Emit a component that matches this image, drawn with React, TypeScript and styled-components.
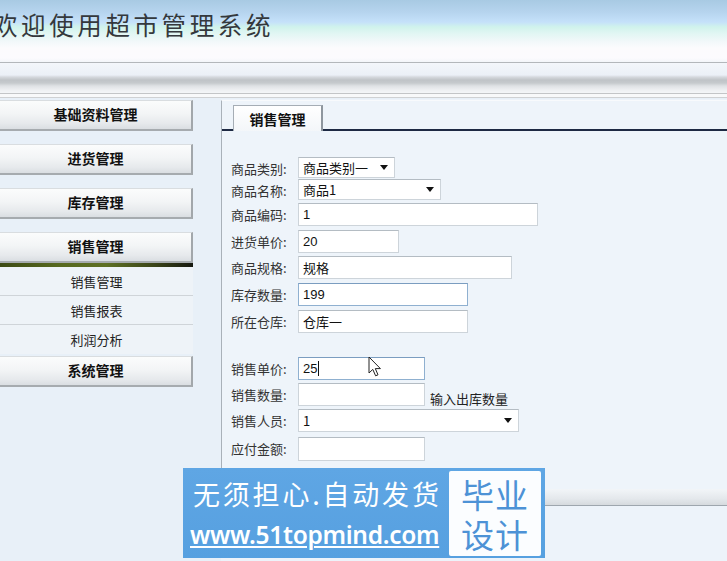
import React from 'react';
import styled, { createGlobalStyle } from 'styled-components';

const Global = createGlobalStyle`
  html, body { margin: 0; padding: 0; }
  body {
    width: 727px; height: 561px; overflow: hidden; background: #edf3fa;
    font-family: "Noto Sans CJK SC", "Noto Sans", sans-serif;
  }
`;

const Page = styled.div`
  position: relative;
  width: 727px;
  height: 561px;
  display: flex;
  flex-direction: column;
  overflow: hidden;
  background: #edf3fa;
`;

const Header = styled.header`
  height: 62px;
  flex: none;
  display: flex;
  align-items: flex-start;
  background: linear-gradient(to bottom, #a8cae3 0px, #b6d4ee 12px, #c5e1fa 22px, #d0f3ec 27px, #e0f6f3 33px, #f3f8fa 42px, #fcfbfd 48px, #fcfbfe 58px, #f3f6fa 62px);
`;

const Title = styled.h1`
  margin: 8px 0 0 -7px;
  font-weight: 400;
  font-size: 24.5px;
  line-height: 34px;
  letter-spacing: 3.6px;
  color: #34383c;
`;

const NavStrip = styled.div`
  height: 37px;
  flex: none;
  background: linear-gradient(to bottom,
    #b3b7bb 0px, #b3b7bb 1px,
    #f3f6fb 1px, #ebf0f7 13px,
    #d5d9de 15px, #bfc3c7 18px, #c6cacd 21px, #dfe2e5 24px, #eef0f2 28px, #f4f6f8 31px,
    #c3c5c7 31px, #c3c5c7 32px,
    #f8f9fa 32px, #f8f9fa 35px,
    #cfd1d3 35px, #cfd1d3 36px,
    #e8f0f8 36px);
`;

const Body = styled.div`
  flex: 1;
  display: flex;
  min-height: 0;
`;

const Sidebar = styled.nav`
  width: 221px;
  flex: none;
  background: #e8f0f8;
  padding-top: 1px;
  display: flex;
  flex-direction: column;
  align-items: flex-start;
`;

const MenuButton = styled.div<{ $gap: number }>`
  box-sizing: border-box;
  width: 193px;
  height: 31px;
  margin-bottom: ${p => p.$gap}px;
  padding-bottom: 2px;
  display: flex;
  align-items: center;
  justify-content: center;
  font-size: 14px;
  font-weight: 700;
  color: #111;
  background: linear-gradient(to bottom, #fbfcfc 0%, #f3f5f6 45%, #e6e9ec 80%, #dadee2 100%);
  border-top: 1px solid #d9dde0;
  border-right: 2px solid #a2a7ab;
  border-bottom: 2px solid #a6abaf;
`;

const ActiveBar = styled.div`
  width: 193px;
  height: 4px;
  background: linear-gradient(to right, #3c4a14 0%, #56681e 30%, #5e7024 55%, #3a4418 80%, #151810 100%);
`;

const SubItem = styled.div`
  box-sizing: border-box;
  width: 193px;
  height: 29px;
  display: flex;
  align-items: center;
  justify-content: center;
  font-size: 13px;
  color: #222;
  background: #eef3f8;
  border-bottom: 1px solid #cfd4d9;
  &:last-of-type { border-bottom: none; }
`;

const SubList = styled.div`
  display: flex;
  flex-direction: column;
  margin-bottom: 2px;
`;

const Main = styled.main`
  flex: 1;
  display: flex;
  flex-direction: column;
  min-width: 0;
  padding-top: 1px;
`;

const Panel = styled.section`
  border-left: 1px solid #a9b1b9;
  border-top: 1px solid #f8fafc;
  background: #eef4fa;
  display: flex;
  flex-direction: column;
`;

const TabBar = styled.div`
  height: 28px;
  display: flex;
  align-items: flex-end;
  padding-left: 11px;
  border-bottom: 2px solid #1d2943;
`;

const Tab = styled.div`
  box-sizing: border-box;
  width: 90px;
  height: 26px;
  margin-bottom: -2px;
  display: flex;
  align-items: center;
  justify-content: center;
  font-size: 14px;
  font-weight: 700;
  color: #111;
  background: linear-gradient(to bottom, #ffffff, #f3f6f9);
  border: 1px solid #a5adb5;
  border-bottom: none;
  border-right: 2px solid #8e969e;
`;

const FormArea = styled.div`
  padding: 26px 0 0 9px;
  display: flex;
  flex-direction: column;
`;

const Group = styled.div<{ $gapAfter?: number }>`
  display: flex;
  flex-direction: column;
  margin-bottom: ${p => p.$gapAfter ?? 0}px;
`;

const Row = styled.div<{ $h: number }>`
  height: ${p => p.$h}px;
  display: flex;
  align-items: flex-start;
`;

const Label = styled.span`
  width: 67px;
  flex: none;
  font-size: 13px;
  line-height: 20px;
  margin-top: 2px;
  color: #333;
  white-space: nowrap;
`;

const Field = styled.div<{ $w: number; $h?: number; $accent?: boolean }>`
  box-sizing: border-box;
  width: ${p => p.$w}px;
  height: ${p => p.$h ?? 23}px;
  background: #fff;
  border: 1px solid ${p => (p.$accent ? '#8fb0d0' : '#cdd4da')};
  border-top-color: ${p => (p.$accent ? '#7b9dc0' : '#b4bcc3')};
  padding: 0 4px;
  display: flex;
  align-items: center;
  font-family: "Liberation Sans", "Noto Sans CJK SC", sans-serif;
  font-size: 13px;
  color: #111;
`;

const SelectBox = styled(Field)`
  justify-content: space-between;
  font-family: "Noto Sans CJK SC", sans-serif;
  padding-right: 6px;
`;

const Arrow = styled.span`
  width: 0; height: 0;
  border-left: 4px solid transparent;
  border-right: 4px solid transparent;
  border-top: 5px solid #111;
`;

const Caret = styled.span`
  display: inline-block;
  width: 1px;
  height: 15px;
  background: #111;
  margin-left: 1px;
`;

const Hint = styled.span`
  font-size: 13px;
  line-height: 20px;
  margin: 6px 0 0 5px;
  color: #222;
`;

const FooterStrip = styled.div`
  margin-top: 28px;
  height: 16px;
  background: linear-gradient(to bottom, #f2f5f8, #e4e8ec 60%, #d6dade);
  border-bottom: 1px solid #9ea6ae;
`;

const Watermark = styled.div`
  position: absolute;
  left: 183px;
  top: 468px;
  width: 362px;
  height: 90px;
  background: linear-gradient(to bottom, #5fa6e4, #56a0e0);
  display: flex;
  align-items: flex-start;
`;

const WmText = styled.div`
  width: 266px;
  display: flex;
  flex-direction: column;
  padding-left: 7px;
  box-sizing: border-box;
  color: #fff;
`;

const WmLine1 = styled.div`
  font-size: 27px;
  letter-spacing: 2.8px;
  line-height: 34px;
  margin-top: 9px;
  padding-left: 3px;
  white-space: nowrap;
`;

const WmLine2 = styled.div`
  font-family: "Noto Sans", "Open Sans", sans-serif;
  font-size: 24.5px;
  font-weight: 600;
  line-height: 32px;
  margin-top: 8px;
  text-decoration: underline;
  text-decoration-thickness: 2px;
  text-underline-offset: 2px;
  letter-spacing: -0.3px;
  white-space: nowrap;
`;

const WmBadge = styled.div`
  margin-top: 3px;
  width: 92px;
  height: 85px;
  background: #fbfdff;
  border-radius: 2px;
  display: flex;
  flex-direction: column;
  align-items: center;
  justify-content: center;
  color: #4d92d6;
  font-size: 33px;
  line-height: 40px;
  letter-spacing: 1px;
`;

const Pointer = styled.svg`
  position: absolute;
  left: 368px;
  top: 356px;
`;

export default function App() {
  return (
    <Page>
      <Global />
      <Header>
        <Title>欢迎使用超市管理系统</Title>
      </Header>
      <NavStrip />
      <Body>
        <Sidebar>
          <MenuButton $gap={13}>基础资料管理</MenuButton>
          <MenuButton $gap={13}>进货管理</MenuButton>
          <MenuButton $gap={13}>库存管理</MenuButton>
          <MenuButton $gap={0}>销售管理</MenuButton>
          <ActiveBar />
          <SubList>
            <SubItem>销售管理</SubItem>
            <SubItem>销售报表</SubItem>
            <SubItem>利润分析</SubItem>
          </SubList>
          <MenuButton $gap={0}>系统管理</MenuButton>
        </Sidebar>
        <Main>
          <Panel>
            <TabBar>
              <Tab>销售管理</Tab>
            </TabBar>
            <FormArea>
              <Group $gapAfter={20}>
                <Row $h={22}>
                  <Label>商品类别:</Label>
                  <SelectBox $w={97} $h={21}>商品类别一<Arrow /></SelectBox>
                </Row>
                <Row $h={24}>
                  <Label>商品名称:</Label>
                  <SelectBox $w={143} $h={21}>商品1<Arrow /></SelectBox>
                </Row>
                <Row $h={27}>
                  <Label>商品编码:</Label>
                  <Field $w={240}>1</Field>
                </Row>
                <Row $h={26}>
                  <Label>进货单价:</Label>
                  <Field $w={101}>20</Field>
                </Row>
                <Row $h={27}>
                  <Label>商品规格:</Label>
                  <Field $w={214}>规格</Field>
                </Row>
                <Row $h={27}>
                  <Label>库存数量:</Label>
                  <Field $w={170} $accent>199</Field>
                </Row>
                <Row $h={27}>
                  <Label>所在仓库:</Label>
                  <Field $w={170}>仓库一</Field>
                </Row>
              </Group>
              <Group>
                <Row $h={26}>
                  <Label>销售单价:</Label>
                  <Field $w={127} $accent>25<Caret /></Field>
                </Row>
                <Row $h={26}>
                  <Label>销售数量:</Label>
                  <Field $w={127}></Field>
                  <Hint>输入出库数量</Hint>
                </Row>
                <Row $h={28}>
                  <Label>销售人员:</Label>
                  <SelectBox $w={221}>1<Arrow /></SelectBox>
                </Row>
                <Row $h={24}>
                  <Label>应付金额:</Label>
                  <Field $w={127} $h={24}></Field>
                </Row>
              </Group>
            </FormArea>
            <FooterStrip />
          </Panel>
        </Main>
      </Body>
      <Watermark>
        <WmText>
          <WmLine1>无须担心.自动发货</WmLine1>
          <WmLine2>www.51topmind.com</WmLine2>
        </WmText>
        <WmBadge>
          <span>毕业</span>
          <span>设计</span>
        </WmBadge>
      </Watermark>
      <Pointer width="14" height="22" viewBox="0 0 14 22">
        <path d="M1 1 L1 17 L4.8 13.4 L7.6 19.8 L10 18.8 L7.3 12.6 L12.4 12.6 Z" fill="#fff" stroke="#222" strokeWidth="1" strokeLinejoin="round" />
      </Pointer>
    </Page>
  );
}
